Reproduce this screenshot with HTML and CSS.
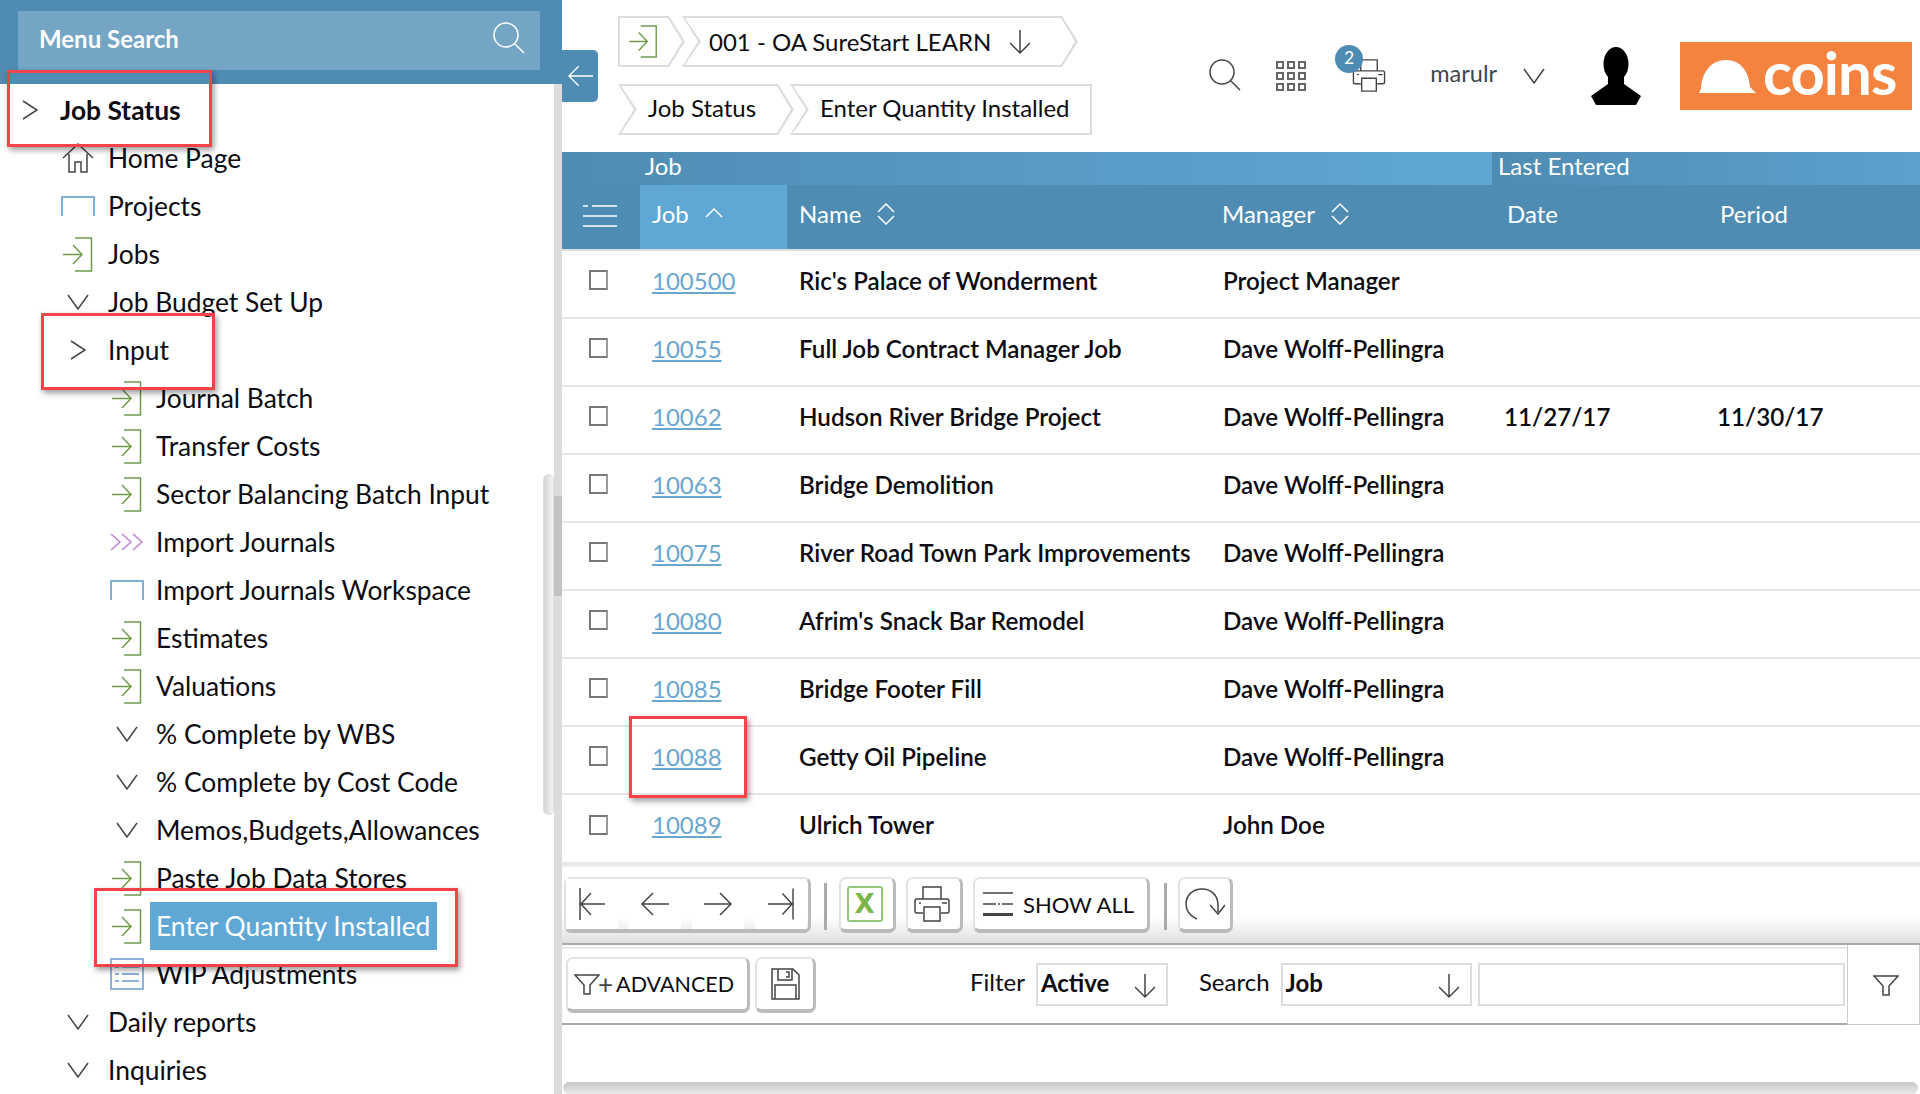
FILE: index.html
```html
<!DOCTYPE html>

<html lang="en">

<head>
    <title>Enter Quantity Installed</title>
    <meta charset="utf-8">
    <meta name="viewport" content="width=device-width, initial-scale=1.0">
    <link rel="stylesheet" href="styles.css">
</head>

<body>
    <svg class="defs" width="0" height="0">
        <symbol id="i-right" viewBox="0 0 16 20"><path d="M1 1 L15 10 L1 19" /></symbol>
        <symbol id="i-down" viewBox="0 0 22 16"><path d="M1 1 L11 15 L21 1" /></symbol>
        <symbol id="i-exit" viewBox="0 0 30 35"><path d="M12 1 H28.5 V34 H12 M0 17.5 H19 M10 8 L19 17.5 L10 27" /></symbol>
        <symbol id="i-space" viewBox="0 0 34 20"><path d="M1 20 V1 H33 V20" /></symbol>
        <symbol id="i-triple" viewBox="0 0 34 18"><path d="M1 1 L10 9 L1 17 M12 1 L21 9 L12 17 M23 1 L32 9 L23 17" /></symbol>
        <symbol id="i-home" viewBox="0 0 32 30"><path d="M1 15 L16 1 L31 15 M7 11 V29 H13 V19 H19 V29 H25 V11" /></symbol>
        <symbol id="i-list" viewBox="0 0 34 32"><path d="M1 1 H33 V31 H1 Z" /><path d="M5 9 H9 M12 9 H29 M5 16 H9 M12 16 H29 M5 23 H9 M12 23 H29" /></symbol>
        <symbol id="i-search" viewBox="0 0 32 32"><circle cx="13" cy="13" r="12" /><path d="M21.5 21.5 L31 31" /></symbol>
        <symbol id="i-arrow-down" viewBox="0 0 22 24"><path d="M11 0 V23 M1 13 L11 23 L21 13" /></symbol>
        <symbol id="i-arrow-left" viewBox="0 0 28 24"><path d="M28 12 H1 M12 1 L1 12 L12 23" /></symbol>
        <symbol id="i-arrow-right" viewBox="0 0 28 24"><path d="M0 12 H27 M16 1 L27 12 L16 23" /></symbol>
        <symbol id="i-first" viewBox="0 0 26 32"><path d="M1 0 V32 M26 16 H2 M12 5 L2 16 L12 27" /></symbol>
        <symbol id="i-last" viewBox="0 0 27 32"><path d="M26 0 V32 M0 16 H25 M15 5 L25 16 L15 27" /></symbol>
        <symbol id="i-printer" viewBox="0 0 36 36"><path d="M9 13 V1 H27 V13 M9 27 H3 Q1 27 1 25 V15 Q1 13 3 13 H33 Q35 13 35 15 V25 Q35 27 33 27 H27 M10 21 H26 V35 H10 Z M5 17 H7 M28 17 H33" /></symbol>
        <symbol id="i-menu" viewBox="0 0 34 22"><path d="M0 1 H5 M9 1 H34 M0 11 H34 M0 21 H34" /></symbol>
        <symbol id="i-lines" viewBox="0 0 30 24"><path d="M0 1 H30 M0 12 H13 M15 12 H17 M19 12 H30" /><path class="thick" d="M0 22.500 H30" /></symbol>
        <symbol id="i-reload" viewBox="0 0 40 32"><path d="M12 31 C3 27 1 20 1 16 C1 7 8 1 17 1 C27 1 33 8 33 17 V24 M25 17 L33 26 L40 17" /></symbol>
        <symbol id="i-funnel" viewBox="0 0 26 21"><path d="M1 1 H25 L16 11 V20 H10 V11 Z" /></symbol>
        <symbol id="i-save" viewBox="0 0 29 32"><path d="M1 1 H22 L28 7 V31 H1 Z M7 1 V12 H21 V1 M15 4 H18 V9 H15 M4 17 H25 V31 H4 Z" /></symbol>
    </svg>

    <div class="page">
        <aside class="sidebar">
            <div class="menu-head">
                <div class="menu-search">
                    <span>Menu Search</span>
                    <svg class="icon ic-search-white"><use href="#i-search" /></svg>
                </div>
            </div>
            <nav class="menu">
                <div class="row lvl0 strong"><span class="slot"><svg class="icon ic-right"><use href="#i-right" /></svg></span>Job Status</div>
                <div class="row lvl1"><span class="slot"><svg class="icon ic-home"><use href="#i-home" /></svg></span>Home Page</div>
                <div class="row lvl1"><span class="slot"><svg class="icon ic-space"><use href="#i-space" /></svg></span>Projects</div>
                <div class="row lvl1"><span class="slot"><svg class="icon ic-exit"><use href="#i-exit" /></svg></span>Jobs</div>
                <div class="row lvl1"><span class="slot"><svg class="icon ic-down"><use href="#i-down" /></svg></span>Job Budget Set Up</div>
                <div class="row lvl1"><span class="slot"><svg class="icon ic-right"><use href="#i-right" /></svg></span>Input</div>
                <div class="row lvl2"><span class="slot"><svg class="icon ic-exit"><use href="#i-exit" /></svg></span>Journal Batch</div>
                <div class="row lvl2"><span class="slot"><svg class="icon ic-exit"><use href="#i-exit" /></svg></span>Transfer Costs</div>
                <div class="row lvl2"><span class="slot"><svg class="icon ic-exit"><use href="#i-exit" /></svg></span>Sector Balancing Batch Input</div>
                <div class="row lvl2"><span class="slot"><svg class="icon ic-triple"><use href="#i-triple" /></svg></span>Import Journals</div>
                <div class="row lvl2"><span class="slot"><svg class="icon ic-space"><use href="#i-space" /></svg></span>Import Journals Workspace</div>
                <div class="row lvl2"><span class="slot"><svg class="icon ic-exit"><use href="#i-exit" /></svg></span>Estimates</div>
                <div class="row lvl2"><span class="slot"><svg class="icon ic-exit"><use href="#i-exit" /></svg></span>Valuations</div>
                <div class="row lvl2"><span class="slot"><svg class="icon ic-down"><use href="#i-down" /></svg></span>% Complete by WBS</div>
                <div class="row lvl2"><span class="slot"><svg class="icon ic-down"><use href="#i-down" /></svg></span>% Complete by Cost Code</div>
                <div class="row lvl2"><span class="slot"><svg class="icon ic-down"><use href="#i-down" /></svg></span>Memos,Budgets,Allowances</div>
                <div class="row lvl2"><span class="slot"><svg class="icon ic-exit"><use href="#i-exit" /></svg></span>Paste Job Data Stores</div>
                <div class="row lvl2"><span class="slot"><svg class="icon ic-exit"><use href="#i-exit" /></svg></span><span class="current">Enter Quantity Installed</span></div>
                <div class="row lvl2"><span class="slot"><svg class="icon ic-list"><use href="#i-list" /></svg></span>WIP Adjustments</div>
                <div class="row lvl1"><span class="slot"><svg class="icon ic-down"><use href="#i-down" /></svg></span>Daily reports</div>
                <div class="row lvl1"><span class="slot"><svg class="icon ic-down"><use href="#i-down" /></svg></span>Inquiries</div>
            </nav>
            <div class="gutter"><div class="gutter-thumb"></div></div>
            <div class="capsule"></div>
        </aside>

        <main class="content">
            <div class="collapse-tab"><svg class="icon ic-back"><use href="#i-arrow-left" /></svg></div>

            <header class="topbar">
                <div class="crumbs">
                    <div class="crumb-row">
                        <div class="chip chip-start chip-icon"><svg class="icon ic-exit"><use href="#i-exit" /></svg></div>
                        <div class="chip chip-company">001 - OA SureStart LEARN <svg class="icon ic-arrow"><use href="#i-arrow-down" /></svg></div>
                    </div>
                    <div class="crumb-row">
                        <div class="chip chip-status">Job Status</div>
                        <div class="chip chip-end chip-page">Enter Quantity Installed</div>
                    </div>
                </div>
                <div class="tools">
                    <svg class="icon ic-search"><use href="#i-search" /></svg>
                    <div class="apps">
                        <i></i><i></i><i></i><i></i><i></i><i></i><i></i><i></i><i></i>
                    </div>
                    <div class="print-queue">
                        <svg class="icon ic-print-top"><use href="#i-printer" /></svg>
                        <span class="badge">2</span>
                    </div>
                    <span class="username">marulr</span>
                    <svg class="icon ic-down user-chevron"><use href="#i-down" /></svg>
                    <svg class="avatar" viewBox="0 0 52 58">
                        <ellipse cx="26" cy="17" rx="12.500" ry="17" />
                        <path d="M18 28 L18 37 L1 49 L6 58 H46 L51 49 L34 37 V28 Z" />
                    </svg>
                    <div class="logo">
                        <svg class="helmet" viewBox="0 0 57 33">
                            <path d="M0 33 L2 29 C3 12 12 0 27 0 C42 0 50 12 51 27 L57 33 Z" />
                        </svg>
                        <span>coins</span>
                    </div>
                </div>
            </header>

            <table class="jobs">
                <colgroup>
                    <col class="col-check">
                    <col class="col-job">
                    <col class="col-name">
                    <col class="col-manager">
                    <col class="col-date">
                    <col class="col-period">
                </colgroup>
                <thead>
                    <tr class="group-row">
                        <th colspan="4" class="group-job">Job</th>
                        <th colspan="2" class="group-last">Last Entered</th>
                    </tr>
                    <tr class="head-row">
                        <th><svg class="icon ic-lines"><use href="#i-menu" /></svg></th>
                        <th class="sorted">Job <svg class="icon ic-sort-up" viewBox="0 0 18 10"><path d="M1 9 L9 1 L17 9" /></svg></th>
                        <th>Name <svg class="icon ic-sort" viewBox="0 0 18 22"><path d="M1 9 L9 1 L17 9 M1 13 L9 21 L17 13" /></svg></th>
                        <th>Manager <svg class="icon ic-sort" viewBox="0 0 18 22"><path d="M1 9 L9 1 L17 9 M1 13 L9 21 L17 13" /></svg></th>
                        <th class="plain-head">Date</th>
                        <th class="plain-head">Period</th>
                    </tr>
                </thead>
                <tbody>
                    <tr><td><span class="check"></span></td><td><a href="#">100500</a></td><td>Ric's Palace of Wonderment</td><td>Project Manager</td><td></td><td></td></tr>
                    <tr><td><span class="check"></span></td><td><a href="#">10055</a></td><td>Full Job Contract Manager Job</td><td>Dave Wolff-Pellingra</td><td></td><td></td></tr>
                    <tr><td><span class="check"></span></td><td><a href="#">10062</a></td><td>Hudson River Bridge Project</td><td>Dave Wolff-Pellingra</td><td>11/27/17</td><td>11/30/17</td></tr>
                    <tr><td><span class="check"></span></td><td><a href="#">10063</a></td><td>Bridge Demolition</td><td>Dave Wolff-Pellingra</td><td></td><td></td></tr>
                    <tr><td><span class="check"></span></td><td><a href="#">10075</a></td><td>River Road Town Park Improvements</td><td>Dave Wolff-Pellingra</td><td></td><td></td></tr>
                    <tr><td><span class="check"></span></td><td><a href="#">10080</a></td><td>Afrim's Snack Bar Remodel</td><td>Dave Wolff-Pellingra</td><td></td><td></td></tr>
                    <tr><td><span class="check"></span></td><td><a href="#">10085</a></td><td>Bridge Footer Fill</td><td>Dave Wolff-Pellingra</td><td></td><td></td></tr>
                    <tr><td><span class="check"></span></td><td><a href="#">10088</a></td><td>Getty Oil Pipeline</td><td>Dave Wolff-Pellingra</td><td></td><td></td></tr>
                    <tr><td><span class="check"></span></td><td><a href="#">10089</a></td><td>Ulrich Tower</td><td>John Doe</td><td></td><td></td></tr>
                </tbody>
            </table>

            <div class="toolbar">
                <div class="btn pager">
                    <span class="pager-cell"><svg class="icon ic-pager"><use href="#i-first" /></svg></span>
                    <span class="pager-cell"><svg class="icon ic-pager-mid"><use href="#i-arrow-left" /></svg></span>
                    <span class="pager-cell"><svg class="icon ic-pager-mid"><use href="#i-arrow-right" /></svg></span>
                    <span class="pager-cell"><svg class="icon ic-pager"><use href="#i-last" /></svg></span>
                </div>
                <span class="divider"></span>
                <div class="btn btn-square"><span class="excel">X</span></div>
                <div class="btn btn-square"><svg class="icon ic-print"><use href="#i-printer" /></svg></div>
                <div class="btn btn-showall"><svg class="icon ic-showall"><use href="#i-lines" /></svg>SHOW ALL</div>
                <span class="divider"></span>
                <div class="btn btn-reload"><svg class="icon ic-reload"><use href="#i-reload" /></svg></div>
            </div>

            <div class="filterbar">
                <div class="filter-main">
                    <div class="btn btn-advanced"><svg class="icon ic-funnel-small"><use href="#i-funnel" /></svg><span class="plus">+</span>ADVANCED</div>
                    <div class="btn btn-save"><svg class="icon ic-save"><use href="#i-save" /></svg></div>
                    <span class="field-label label-filter">Filter</span>
                    <div class="select select-filter">Active <svg class="icon ic-arrow"><use href="#i-arrow-down" /></svg></div>
                    <span class="field-label label-search">Search</span>
                    <div class="select select-search">Job <svg class="icon ic-arrow"><use href="#i-arrow-down" /></svg></div>
                    <div class="search-input"></div>
                </div>
                <div class="filter-go"><svg class="icon ic-funnel"><use href="#i-funnel" /></svg></div>
            </div>

            <div class="hscroll"></div>
        </main>

        <div class="callout callout-status"></div>
        <div class="callout callout-input"></div>
        <div class="callout callout-enter"></div>
        <div class="callout callout-job"></div>
    </div>
</body>

</html>
```

FILE: styles.css
```css
html,
body {
    margin: 0;
    padding: 0;
    background-color: white;
    color: #0c0c12;
    font-family: "Lato", "Liberation Sans", sans-serif;
}

.defs {
    position: absolute;
}

.page {
    position: relative;
    display: flex;
    width: 1920px;
    height: 1094px;
    overflow: hidden;
}

.icon {
    fill: none;
    stroke: #444;
    stroke-width: 1.5;
    flex: none;
}

/* sidebar */

.sidebar {
    position: relative;
    width: 562px;
    flex: none;
}

.menu-head {
    height: 84px;
    padding: 11px 22px 0 18px;
    box-sizing: border-box;
    background-color: #4f8cb3;
}

.menu-search {
    display: flex;
    align-items: center;
    justify-content: space-between;
    height: 59px;
    box-sizing: border-box;
    padding: 0 15px 5px 21px;
    background-color: #74a5c4;
    color: white;
    font-size: 24px;
    font-weight: 700;
}

.ic-search-white {
    width: 32px;
    height: 32px;
    stroke: white;
}

.menu {
    padding-top: 2px;
}

.row {
    display: flex;
    align-items: center;
    height: 48px;
    font-size: 26.4px;
    white-space: nowrap;
}

.strong {
    font-weight: 700;
}

.slot {
    display: flex;
    align-items: center;
    justify-content: center;
    width: 40px;
    flex: none;
}

.lvl0 {
    padding-left: 10px;
    gap: 10px;
}

.lvl1 {
    padding-left: 58px;
    gap: 10px;
}

.lvl2 {
    padding-left: 107px;
    gap: 9px;
}

.ic-right {
    width: 16px;
    height: 20px;
}

.ic-down {
    width: 22px;
    height: 16px;
}

.ic-exit {
    width: 30px;
    height: 35px;
    stroke: #6f9a4e;
}

.ic-space {
    width: 34px;
    height: 20px;
    stroke: #7fb0d6;
    stroke-width: 2;
}

.ic-triple {
    width: 34px;
    height: 18px;
    stroke: #c07fd6;
}

.ic-home {
    width: 32px;
    height: 30px;
}

.ic-list {
    width: 34px;
    height: 32px;
    stroke: #8fb0dc;
    stroke-width: 2;
}

.current {
    margin-left: -6px;
    padding: 0 7px 0 6px;
    line-height: 48px;
    background-color: #5fa8d6;
    color: white;
}

.gutter {
    position: absolute;
    top: 84px;
    right: 0;
    bottom: 0;
    width: 8px;
    background-color: #dcdcdc;
}

.gutter-thumb {
    margin-top: 412px;
    height: 100px;
    background-color: #c2c2c2;
}

.capsule {
    position: absolute;
    top: 474px;
    left: 543px;
    width: 11px;
    height: 341px;
    box-sizing: border-box;
    border: 1px solid #ddd;
    border-radius: 6px;
    background: linear-gradient(to right, #d4d4d4, #f4f4f4);
}

/* top bar */

.content {
    position: relative;
    flex: 1;
    min-width: 0;
}

.collapse-tab {
    position: absolute;
    top: 50px;
    left: 0;
    display: flex;
    align-items: center;
    justify-content: center;
    width: 36px;
    height: 52px;
    border-radius: 0 5px 5px 0;
    background-color: #4f8cb3;
    z-index: 1;
}

.ic-back {
    width: 25px;
    height: 22px;
    stroke: white;
}

.topbar {
    display: flex;
    height: 152px;
}

.crumbs {
    display: flex;
    flex-direction: column;
    gap: 17px;
    padding: 16px 0 0 56px;
}

.crumb-row {
    display: flex;
    gap: 0;
}

.chip {
    position: relative;
    display: flex;
    align-items: center;
    height: 51px;
    box-sizing: border-box;
    background-color: #dcdcdc;
    font-size: 24px;
    white-space: nowrap;
    clip-path: polygon(0 0, calc(100% - 16px) 0, 100% 50%, calc(100% - 16px) 100%, 0 100%, 16px 50%);
}

.chip::before {
    content: "";
    position: absolute;
    inset: 0;
    background-color: white;
    clip-path: polygon(3px 2px, calc(100% - 17px) 2px, calc(100% - 3px) 50%, calc(100% - 17px) calc(100% - 2px), 3px calc(100% - 2px), 19px 50%);
    z-index: 0;
}

.chip > * {
    position: relative;
    z-index: 1;
}

.chip-start {
    clip-path: polygon(0 0, calc(100% - 16px) 0, 100% 50%, calc(100% - 16px) 100%, 0 100%);
}

.chip-start::before {
    clip-path: polygon(2px 2px, calc(100% - 17px) 2px, calc(100% - 3px) 50%, calc(100% - 17px) calc(100% - 2px), 2px calc(100% - 2px));
}

.chip-end {
    clip-path: polygon(0 0, 100% 0, 100% 100%, 0 100%, 16px 50%);
}

.chip-end::before {
    clip-path: polygon(3px 2px, calc(100% - 2px) 2px, calc(100% - 2px) calc(100% - 2px), 3px calc(100% - 2px), 19px 50%);
}

.chip-icon {
    width: 67px;
    padding-left: 11px;
}

.chip-icon .ic-exit {
    width: 29px;
    height: 33px;
}

.chip-company {
    width: 396px;
    margin-left: -3px;
    padding-left: 27px;
    isolation: isolate;
}

.chip-company::before {
    z-index: -1;
}

.ic-arrow {
    width: 22px;
    height: 24px;
    margin-left: 18px;
}

.chip-status {
    width: 176px;
    padding: 0 0 5px 30px;
    isolation: isolate;
}

.chip-page {
    width: 302px;
    margin-left: -4px;
    padding: 0 0 5px 30px;
    isolation: isolate;
}

.chip-status::before,
.chip-page::before {
    z-index: -1;
}

.tools {
    display: flex;
    align-items: center;
    margin-left: auto;
    padding-right: 8px;
}

.ic-search {
    width: 32px;
    height: 32px;
    margin-top: -3px;
}

.apps {
    display: grid;
    grid-template-columns: repeat(3, 8px);
    gap: 3px;
    margin-left: 35px;
}

.apps i {
    display: block;
    width: 8px;
    height: 8px;
    box-sizing: border-box;
    border: 2px solid #666;
}

.print-queue {
    position: relative;
    margin-left: 46px;
    margin-top: -1px;
    width: 34px;
    height: 33px;
}

.ic-print-top {
    width: 34px;
    height: 33px;
}

.badge {
    position: absolute;
    top: -14px;
    left: -17px;
    width: 28px;
    height: 28px;
    border-radius: 50%;
    background-color: #4f8cb3;
    color: white;
    font-size: 17px;
    line-height: 26px;
    text-align: center;
}

.username {
    margin-left: 44px;
    margin-top: -6px;
    font-size: 23.5px;
    color: #3d4650;
}

.user-chevron {
    margin-left: 26px;
}

.avatar {
    width: 52px;
    height: 58px;
    margin-left: 45px;
    fill: black;
    filter: blur(.5px);
}

.logo {
    display: flex;
    align-items: center;
    gap: 7px;
    width: 232px;
    height: 68px;
    box-sizing: border-box;
    margin-left: 38px;
    padding-left: 19px;
    background-color: #f48340;
    color: white;
    font-size: 60px;
    font-weight: 700;
    letter-spacing: -1px;
}

.logo span {
    line-height: 60px;
    margin-top: -8px;
}

.helmet {
    width: 57px;
    height: 33px;
    flex: none;
    fill: white;
    margin-top: 1px;
}

/* table */

.jobs {
    width: 1358px;
    table-layout: fixed;
    border-collapse: collapse;
}

.col-check {
    width: 78px;
}

.col-job {
    width: 147px;
}

.col-name {
    width: 423px;
}

.col-manager {
    width: 282px;
}

.col-date {
    width: 213px;
}

.jobs th {
    padding: 0;
    color: white;
    font-size: 24px;
    font-weight: 400;
    line-height: 24px;
    text-align: left;
}

.group-row {
    height: 33px;
}

.jobs .group-job {
    padding: 0 0 5px 83px;
    background: linear-gradient(to right, #4f8cb3, #5fa8d6);
}

.jobs .group-last {
    padding: 0 0 5px 6px;
    background: linear-gradient(to right, #4f8cb3, #5ba2cf);
}

.head-row {
    height: 65px;
    background-color: #4f8cb3;
}

.jobs .head-row th {
    padding: 0 0 7px 12px;
    border-bottom: 2px solid #ddd;
}

.jobs .head-row th:first-child {
    padding: 0 0 0 21px;
}

.jobs .head-row th.plain-head {
    padding-left: 15px;
}

.jobs .head-row th.sorted {
    background-color: #5fa8d6;
    padding-left: 12px;
}

.ic-lines {
    display: block;
    width: 34px;
    height: 22px;
    stroke: white;
    margin-top: -2px;
}

.ic-sort-up {
    width: 18px;
    height: 10px;
    stroke: white;
    margin-left: 10px;
    vertical-align: 5px;
}

.ic-sort {
    width: 18px;
    height: 22px;
    stroke: white;
    margin-left: 10px;
    vertical-align: -2px;
}

.jobs tbody tr {
    height: 68px;
}

.jobs td {
    padding: 0 0 8px 12px;
    border-bottom: 2px solid #e6e6e6;
    font-size: 24.2px;
    font-weight: 600;
    white-space: nowrap;
}

.jobs td:first-child {
    padding-left: 27px;
}

.jobs td:nth-child(4) {
    padding-left: 13px;
}

.jobs a {
    color: #6ba6cf;
    font-size: 24px;
    font-weight: 400;
}

.jobs tbody tr:last-child td {
    border-bottom: 0;
}

.check {
    display: block;
    width: 19px;
    height: 20px;
    box-sizing: border-box;
    border: 2px solid #777;
    border-right-color: #999;
    background-color: white;
}

/* toolbars */

.btn {
    display: flex;
    align-items: center;
    box-sizing: border-box;
    border: 2px solid #e2e2e2;
    border-right: 3px solid #bbb;
    border-bottom: 4px solid #bbb;
    border-radius: 7px;
    background-color: white;
    font-size: 21.5px;
}

.toolbar {
    display: flex;
    align-items: flex-start;
    height: 83px;
    box-sizing: border-box;
    padding: 12px 0 0 2px;
    border-top: 3px solid #e8e8e8;
    border-bottom: 2px solid #aaa;
    background: linear-gradient(to bottom, #eee 0, #eee 2px, white 2px, white 52px, #e0e0e0 100%);
}

.toolbar .btn {
    height: 56px;
}

.pager {
    gap: 11px;
    width: 247px;
    background-color: transparent;
    align-items: stretch;
}

.pager-cell {
    display: flex;
    align-items: flex-start;
    justify-content: center;
    width: 52px;
    height: 50px;
    padding-top: 9px;
    box-sizing: border-box;
    background-color: white;
}

.ic-pager {
    width: 26px;
    height: 32px;
}

.ic-pager-mid {
    width: 28px;
    height: 24px;
    margin-top: 4px;
}

.divider {
    width: 3px;
    height: 47px;
    margin: 6px 12px 0 13px;
    background-color: #aaa;
}

.btn-square {
    width: 57px;
    justify-content: center;
    margin-right: 10px;
    padding-right: 5px;
}

.excel {
    display: block;
    width: 36px;
    height: 36px;
    box-sizing: border-box;
    border: 2px solid #95c77a;
    border-radius: 3px;
    color: #7ab648;
    font-family: "DejaVu Sans", sans-serif;
    font-size: 26px;
    font-weight: 700;
    line-height: 32px;
    text-align: center;
}

.ic-print {
    width: 36px;
    height: 36px;
}

.btn-showall {
    width: 177px;
    padding-left: 8px;
    margin-right: 1px;
    font-size: 22px;
}

.ic-showall {
    width: 30px;
    height: 24px;
    margin-right: 10px;
}

.thick {
    stroke-width: 3;
}

.btn-reload {
    width: 55px;
    justify-content: center;
    margin-left: -1px;
}

.ic-reload {
    width: 40px;
    height: 32px;
}

.filterbar {
    display: flex;
    height: 80px;
    box-sizing: border-box;
}

.filter-main {
    display: flex;
    align-items: center;
    flex: 1;
    min-width: 0;
    padding: 0 0 0 4px;
    box-sizing: border-box;
    border-top: 2px solid #e8e8e8;
    border-bottom: 2px solid #aaa;
    margin-top: 2px;
    font-size: 24px;
}

.filter-main .btn {
    height: 56px;
    margin-top: -2px;
}

.btn-advanced {
    width: 184px;
    padding-left: 6px;
}

.ic-funnel-small {
    width: 26px;
    height: 21px;
}

.plus {
    margin: 0 3px 0 -2px;
    font-size: 26px;
    color: #444;
}

.btn-save {
    width: 61px;
    justify-content: center;
    margin-left: 5px;
}

.ic-save {
    width: 29px;
    height: 32px;
}

.field-label {
    font-size: 24px;
    margin-top: -9px;
}

.label-filter {
    margin-left: 154px;
}

.label-search {
    margin-left: 31px;
}

.select {
    display: flex;
    align-items: center;
    justify-content: space-between;
    height: 43px;
    box-sizing: border-box;
    margin-top: -3px;
    padding: 0 10px 4px 3px;
    border: 2px solid #ddd;
    font-weight: 700;
}

.select .ic-arrow {
    height: 26px;
    margin: 6px 0 0;
}

.select-filter {
    width: 132px;
    margin-left: 11px;
}

.select-search {
    width: 191px;
    margin-left: 11px;
}

.search-input {
    width: 367px;
    height: 43px;
    box-sizing: border-box;
    margin: -3px 0 0 6px;
    border: 2px solid #ddd;
}

.filter-go {
    display: flex;
    align-items: center;
    justify-content: center;
    width: 73px;
    box-sizing: border-box;
    padding: 2px 0 0 5px;
    border-left: 1px solid #ccc;
    border-right: 1px solid #ccc;
    border-bottom: 1px solid #ccc;
}

.ic-funnel {
    width: 26px;
    height: 21px;
}

.hscroll {
    height: 12px;
    margin: 57px 2px 0 1px;
    border-radius: 6px;
    background: linear-gradient(to bottom, #c8c8c8, #e8e8e8);
}

/* red annotation boxes */

.callout {
    position: absolute;
    box-sizing: border-box;
    border: 3px solid #f5434a;
    box-shadow: 2px 3px 6px rgba(0, 0, 0, .4);
}

.callout-status {
    left: 7px;
    top: 70px;
    width: 205px;
    height: 77px;
}

.callout-input {
    left: 41px;
    top: 313px;
    width: 174px;
    height: 77px;
}

.callout-enter {
    left: 94px;
    top: 888px;
    width: 364px;
    height: 79px;
}

.callout-job {
    left: 629px;
    top: 716px;
    width: 118px;
    height: 82px;
}
```
